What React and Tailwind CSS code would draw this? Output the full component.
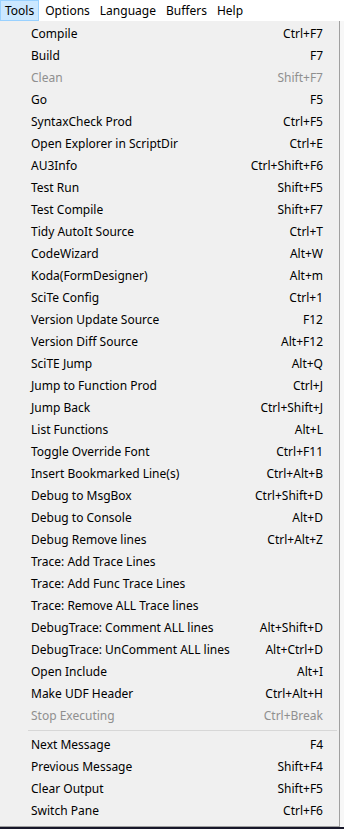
import React from "react";

const topItems = [
  ["Compile", "Ctrl+F7"],
  ["Build", "F7"],
  ["Clean", "Shift+F7", true],
  ["Go", "F5"],
  ["SyntaxCheck Prod", "Ctrl+F5"],
  ["Open Explorer in ScriptDir", "Ctrl+E"],
  ["AU3Info", "Ctrl+Shift+F6"],
  ["Test Run", "Shift+F5"],
  ["Test Compile", "Shift+F7"],
  ["Tidy AutoIt Source", "Ctrl+T"],
  ["CodeWizard", "Alt+W"],
  ["Koda(FormDesigner)", "Alt+m"],
  ["SciTe Config", "Ctrl+1"],
  ["Version Update Source", "F12"],
  ["Version Diff Source", "Alt+F12"],
  ["SciTE Jump", "Alt+Q"],
  ["Jump to Function Prod", "Ctrl+J"],
  ["Jump Back", "Ctrl+Shift+J"],
  ["List Functions", "Alt+L"],
  ["Toggle Override Font", "Ctrl+F11"],
  ["Insert Bookmarked Line(s)", "Ctrl+Alt+B"],
  ["Debug to MsgBox", "Ctrl+Shift+D"],
  ["Debug to Console", "Alt+D"],
  ["Debug Remove lines", "Ctrl+Alt+Z"],
  ["Trace: Add Trace Lines", ""],
  ["Trace: Add Func Trace Lines", ""],
  ["Trace: Remove ALL Trace lines", ""],
  ["DebugTrace: Comment ALL lines", "Alt+Shift+D"],
  ["DebugTrace: UnComment ALL lines", "Alt+Ctrl+D"],
  ["Open Include", "Alt+I"],
  ["Make UDF Header", "Ctrl+Alt+H"],
  ["Stop Executing", "Ctrl+Break", true],
];

const bottomItems = [
  ["Next Message", "F4"],
  ["Previous Message", "Shift+F4"],
  ["Clear Output", "Shift+F5"],
  ["Switch Pane", "Ctrl+F6"],
];

function Item({ label, keys, disabled }) {
  return (
    <div
      className={`h-[22px] flex items-center justify-between pl-[31px] pr-[16px] ${
        disabled ? "text-[#8f8f8f]" : "text-black"
      }`}
    >
      <span>{label}</span>
      <span>{keys}</span>
    </div>
  );
}

export default function App() {
  return (
    <div
      className="w-[344px] h-[829px] flex flex-col bg-[#17172a] overflow-hidden text-[12px] leading-none"
      style={{ fontFamily: '"Noto Sans", "Open Sans", sans-serif' }}
    >
      {/* Menu bar */}
      <div className="h-[21px] bg-white flex items-stretch text-black">
        <div className="px-[4px] flex items-center bg-[#cce8ff] border border-[#99d1ff]">Tools</div>
        <div className="flex items-center gap-[10px] pl-[6px]">
          <span>Options</span>
          <span>Language</span>
          <span>Buffers</span>
          <span>Help</span>
        </div>
        <div className="flex-1" />
      </div>

      {/* Dropdown */}
      <div className="flex">
        <div className="w-[340px] bg-[#f0f0f0] border-r border-b border-[#a0a0a0] pt-[2px] pb-[4px]">
          {topItems.map(([l, k, d]) => (
            <Item key={l} label={l} keys={k} disabled={d} />
          ))}
          <div className="py-[3px] pl-[28px] pr-[2px]">
            <div className="h-px bg-[#d7d7d7]" />
          </div>
          {bottomItems.map(([l, k]) => (
            <Item key={l} label={l} keys={k} />
          ))}
        </div>
        <div className="flex-1 bg-[#f7f7f7]" />
      </div>
    </div>
  );
}
